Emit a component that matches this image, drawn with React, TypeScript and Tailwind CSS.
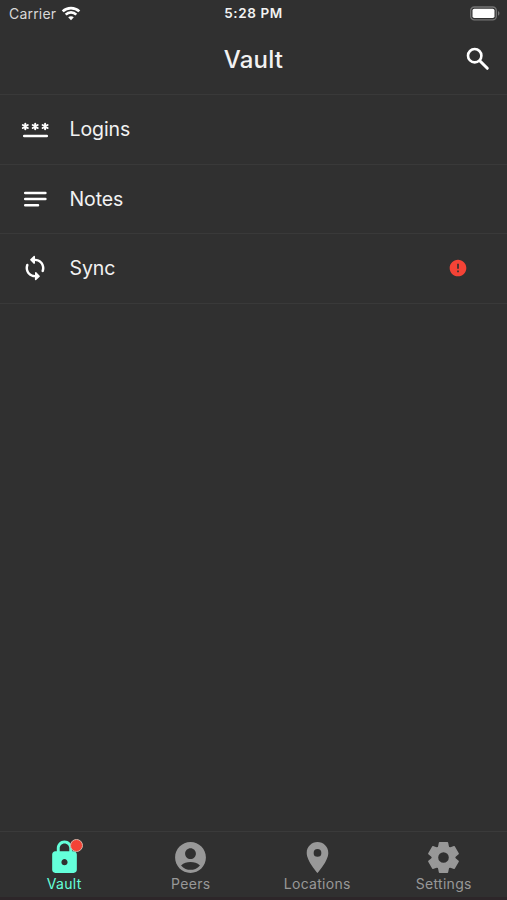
import React from 'react';
import { MdAccountCircle, MdLocationOn, MdLock, MdError } from 'react-icons/md';

const PasswordIcon = () => (
    <svg width="28" height="28" viewBox="0 0 28 28" fill="none" stroke="currentColor" strokeLinecap="round">
        <path d="M3.2 21.1h22.6" strokeWidth="2.5" />
        {[4.3, 14.2, 24.1].map((x) => (
            <g key={x} transform={`translate(${x} 11.5)`} strokeWidth="2">
                <path d="M0-2.8v5.6M-2.5-1.5l5 3M-2.5 1.5l5-3" />
            </g>
        ))}
    </svg>
);

const NotesIcon = () => (
    <svg width="28" height="28" viewBox="0 0 28 28" fill="none" stroke="currentColor" strokeWidth="2.5" strokeLinecap="round">
        <path d="M4.2 8h20.2M4.2 14.1h20.2M4.2 20.2h12.8" />
    </svg>
);

const SyncIcon = () => (
    <svg width="28" height="28" viewBox="0 0 24 24" fill="currentColor">
        <path d="M12 4V2.2c0-.6-.7-.9-1.1-.5L8 4.6c-.3.3-.3.6 0 .8l2.9 2.9c.4.4 1.1.1 1.1-.5V6c3.3 0 6 2.7 6 6 0 .8-.2 1.500-.4 2.200-.2.4-.1.8.2 1.100.6.6 1.500.3 1.800-.4.3-.9.5-1.900.5-2.900 0-4.400-3.600-8-8-8zm0 14c-3.300 0-6-2.700-6-6 0-.8.2-1.500.4-2.200.2-.4.1-.8-.2-1.100-.6-.6-1.500-.3-1.800.4-.3.9-.5 1.900-.5 2.900 0 4.400 3.600 8 8 8v1.800c0 .6.7.9 1.100.5L16 19.400c.3-.3.3-.6 0-.8l-2.900-2.900c-.4-.4-1.100-.1-1.100.5z" />
    </svg>
);

const SearchIcon = () => (
    <svg width="30" height="30" viewBox="0 0 30 30" fill="none" stroke="currentColor" strokeLinecap="round">
        <circle cx="11.7" cy="11.700" r="6.700" strokeWidth="2.600" />
        <path d="M17 17l7.300 7.300" strokeWidth="3" />
    </svg>
);

const GearIcon = ({ size }: { size: number }) => (
    <svg width={size} height={size} viewBox="-18.5 -18.5 37 37" fill="currentColor" stroke="currentColor" strokeLinejoin="round">
        <circle r="8.6" fill="none" strokeWidth="6.6" />
        {[0, 60, 120, 180, 240, 300].map((angle) => (
            <path key={angle} transform={`rotate(${angle})`} d="M-4.9-9.5L-3.9-14.6H3.9L4.9-9.5z" strokeWidth="1.6" />
        ))}
    </svg>
);

const WifiIcon = () => (
    <svg width="20" height="15" viewBox="0 0 20 15" fill="none" stroke="currentColor" strokeWidth="2.7">
        <path d="M1.7 5.4C6.3.9 13.7.9 18.3 5.4M4.7 8.6c3-2.9 7.6-2.9 10.6 0" />
        <path d="M10 14.2l-2.8-2.9c1.6-1.5 4-1.500 5.600 0z" fill="currentColor" stroke="none" />
    </svg>
);

const BatteryIcon = () => (
    <svg width="32" height="15" viewBox="0 0 32 15">
        <rect x="1.7" y="1" width="25.6" height="12.8" rx="3.6" fill="none" stroke="#747474" strokeWidth="1.3" />
        <rect x="3.5" y="2.7" width="22" height="9.4" rx="1.8" fill="#fff" />
        <path d="M29 5.1c2 .9 2 3.7 0 4.6z" fill="#747474" />
    </svg>
);

const rows = [
    { name: 'Logins', icon: <PasswordIcon /> },
    { name: 'Notes', icon: <NotesIcon /> },
    { name: 'Sync', icon: <SyncIcon />, error: true },
];

const tabs = [
    { name: 'Vault', icon: MdLock, active: true },
    { name: 'Peers', icon: MdAccountCircle },
    { name: 'Locations', icon: MdLocationOn },
    { name: 'Settings', icon: GearIcon },
];

const App: React.FC = () => {
    return (
        <div className="flex h-[900px] w-[507px] flex-col overflow-hidden bg-[#303030] font-['Inter','Liberation_Sans',sans-serif] text-[#f2f2f2]">
            {/* Status bar */}
            <div className="grid h-[26px] shrink-0 grid-cols-3 items-center">
                <div className="flex items-center gap-[5px] pl-[9px] text-[14px] text-[#d8d8d8]">
                    <span className="tracking-[0.2px]">Carrier</span>
                    <span className="text-white"><WifiIcon /></span>
                </div>
                <span className="pt-px text-center text-[13.5px] font-semibold tracking-[0.6px]">5:28 PM</span>
                <div className="flex justify-end pr-[6px]"><BatteryIcon /></div>
            </div>

            {/* Header */}
            <header className="grid h-[69px] shrink-0 grid-cols-[60px_1fr_60px] items-center border-b border-[#393939] pb-px">
                <h1 className="col-start-2 text-center text-[24px] font-medium tracking-[0.2px]">Vault</h1>
                <span className="mb-px justify-self-center pl-px text-white"><SearchIcon /></span>
            </header>

            {/* Vault sections */}
            <main className="flex-1">
                {rows.map((row) => (
                    <div key={row.name} className="flex h-[69.5px] items-center border-b border-[#393939] pr-[39px] pl-[21px]">
                        <span className="text-white">{row.icon}</span>
                        <span className="ml-5 flex-1 pt-px pl-[0.5px] text-[19.5px] tracking-[-0.1px]">{row.name}</span>
                        {row.error && <MdError size={20} className="text-[#f44336]" />}
                    </div>
                ))}
            </main>

            {/* Tab bar */}
            <nav className="grid h-[69px] shrink-0 grid-cols-4 border-t border-b-[3px] border-t-[#3a3a3a] border-b-[#2d2629] pl-px">
                {tabs.map(({ name, icon: Icon, active }) => (
                    <div key={name} className={`flex flex-col items-center pt-[7px] ${active ? 'text-[#64ffda]' : 'text-[#989898]'}`}>
                        <div className="relative">
                            <Icon size={37} />
                            {active && <span className="absolute top-0 right-0 size-[13px] rounded-full border border-[#d7b5a8] bg-[#f44336]" />}
                        </div>
                        <span className="-mt-px text-[14px] leading-[17px] tracking-[0.3px]">{name}</span>
                    </div>
                ))}
            </nav>
        </div>
    );
};

export default App;
